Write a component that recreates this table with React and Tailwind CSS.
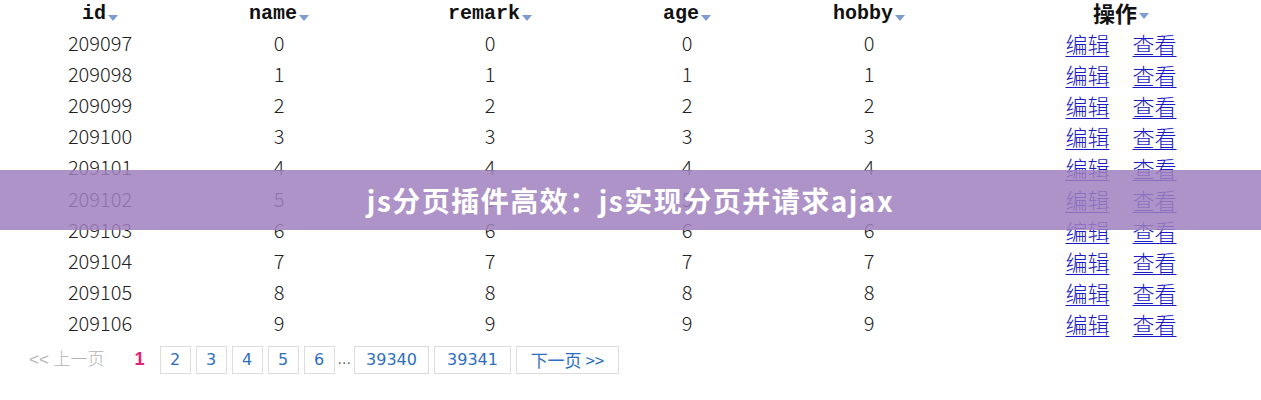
import React from "react";

const Tri = () => (
  <svg width="10" height="6" viewBox="0 0 10 6" className="ml-[2px] mt-[8px]">
    <path d="M0 0 L10 0 L5 6 Z" fill="#7d9dd0" />
  </svg>
);

const cols = "grid grid-cols-[200px_158px_264px_130px_234px_270px]";

const headers = ["id", "name", "remark", "age", "hobby"];

export default function App() {
  const rows = Array.from({ length: 10 }, (_, i) => i);
  return (
    <div className="relative w-[1261px] h-[400px] bg-white overflow-hidden">
      <div className={`${cols} h-[27px] items-center`}>
        {headers.map((h) => (
          <div key={h} className="flex justify-center items-center">
            <span className="font-['Liberation_Mono',monospace] font-bold text-[20px] leading-none text-[#111]">{h}</span>
            <Tri />
          </div>
        ))}
        <div className="flex justify-center items-center -mt-[4px]">
          <span className="font-['Noto_Sans_CJK_SC',sans-serif] font-bold text-[22px] leading-none text-[#111]">操作</span>
          <Tri />
        </div>
      </div>
      {rows.map((i) => (
        <div key={i} className={`${cols} h-[31.2px] items-center font-['Noto_Sans_CJK_SC',sans-serif] font-light text-[20px] leading-none text-[#222]`}>
          <div className="text-center">{209097 + i}</div>
          <div className="text-center">{i}</div>
          <div className="text-center">{i}</div>
          <div className="text-center">{i}</div>
          <div className="text-center">{i}</div>
          <div className="flex justify-center gap-[23px] text-[#1a1ac4] text-[22px]">
            <a href="#" className="underline underline-offset-[3px] decoration-1">编辑</a>
            <a href="#" className="underline underline-offset-[3px] decoration-1">查看</a>
          </div>
        </div>
      ))}
      <div className="flex items-center mt-[7px] pl-[29px] h-[28px] font-['DejaVu_Sans','Noto_Sans_CJK_SC',sans-serif] text-[16px]">
        <span className="text-[#b3b3b3] font-['Liberation_Sans','Noto_Sans_CJK_SC',sans-serif] text-[17px] font-light">&lt;&lt; 上一页</span>
        <span className="ml-[30px] mr-[15px] text-[#e0207a] font-bold font-['Liberation_Sans',sans-serif] text-[18px]">1</span>
        <div className="flex items-center gap-[5px] text-[#2f6fc0]">
          {["2", "3", "4", "5", "6"].map((n) => (
            <span key={n} className="h-[28px] w-[31px] border border-[#dcdcdc] flex items-center justify-center">{n}</span>
          ))}
          <span className="text-[#666] -mx-[2px] self-end pb-[4px] text-[14px]">...</span>
          <span className="h-[28px] w-[75px] border border-[#dcdcdc] flex items-center justify-center">39340</span>
          <span className="h-[28px] w-[77px] border border-[#dcdcdc] flex items-center justify-center">39341</span>
          <span className="h-[28px] w-[103px] border border-[#dcdcdc] flex items-center justify-center font-['Noto_Sans_CJK_SC',sans-serif] text-[17px]">下一页 &gt;&gt;</span>
        </div>
      </div>
      <div className="absolute left-0 right-0 top-[170px] h-[60px] bg-[rgba(160,128,190,0.85)] flex items-center justify-center">
        <span className="text-white font-bold text-[28px] tracking-[1.5px] font-['Noto_Sans_CJK_SC',sans-serif] leading-none">js分页插件高效：js实现分页并请求ajax</span>
      </div>
    </div>
  );
}
